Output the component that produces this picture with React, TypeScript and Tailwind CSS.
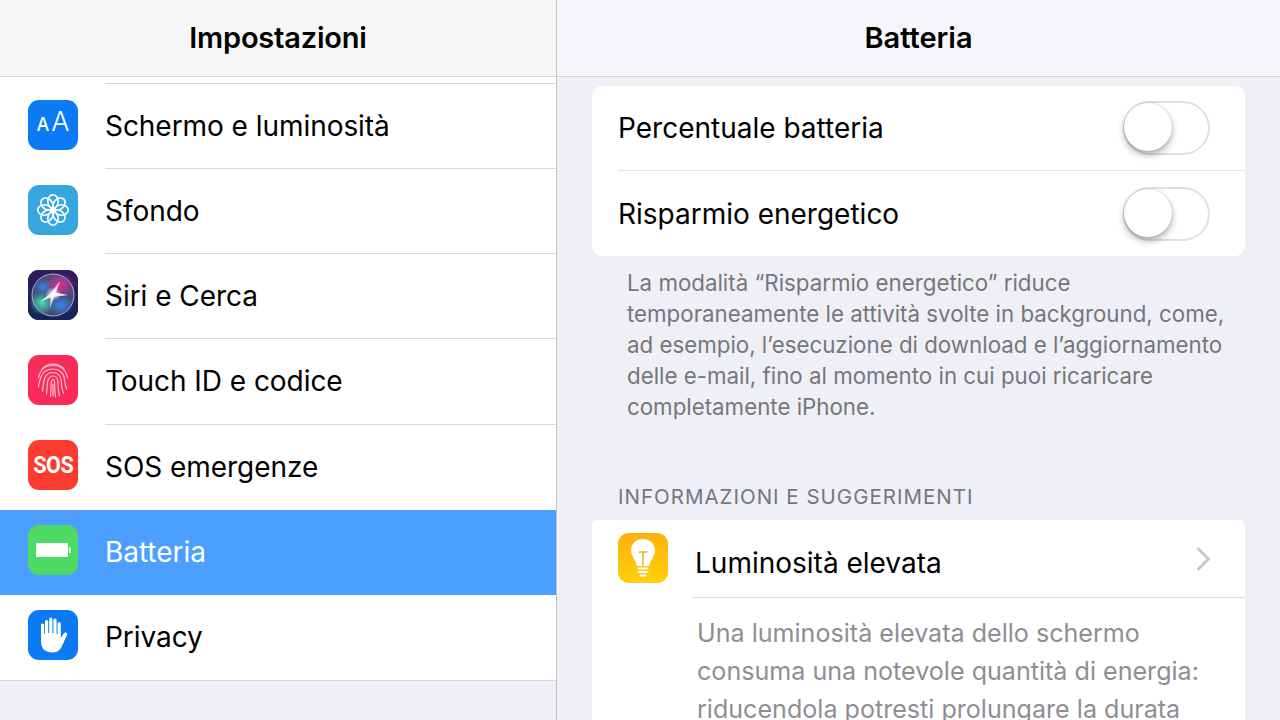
import React from 'react';

const Aa = () => (
  <div className="flex items-baseline justify-center text-white font-['Inter',sans-serif] leading-none pb-[7px]">
    <span className="text-[18px] font-medium mr-[2px]">A</span>
    <span className="text-[27px] font-light">A</span>
  </div>
);

const Flower = () => (
  <svg width="36" height="36" viewBox="0 0 36 36" fill="none" stroke="white" strokeWidth="1.6">
    {[0, 45, 90, 135, 180, 225, 270, 315].map((a) => (
      <ellipse key={a} cx="18" cy="9.5" rx="5.2" ry="6.8" transform={`rotate(${a} 18 18)`} />
    ))}
    <circle cx="18" cy="18" r="2.2" fill="white" stroke="none" />
  </svg>
);

const Siri = () => (
  <svg width="50" height="50" viewBox="0 0 50 50">
    <defs>
      <linearGradient id="siriBg" x1="0" y1="0" x2="0" y2="1">
        <stop offset="0%" stopColor="#35195c" />
        <stop offset="100%" stopColor="#12265a" />
      </linearGradient>
      <radialGradient id="siriPink" cx="50%" cy="50%" r="50%">
        <stop offset="0%" stopColor="#ea2f96" stopOpacity="0.95" />
        <stop offset="100%" stopColor="#ea2f96" stopOpacity="0" />
      </radialGradient>
      <radialGradient id="siriTeal" cx="50%" cy="50%" r="50%">
        <stop offset="0%" stopColor="#3fe8b4" stopOpacity="0.95" />
        <stop offset="100%" stopColor="#3fe8b4" stopOpacity="0" />
      </radialGradient>
      <radialGradient id="siriBlue" cx="50%" cy="50%" r="50%">
        <stop offset="0%" stopColor="#2f8cf2" stopOpacity="0.95" />
        <stop offset="100%" stopColor="#2f8cf2" stopOpacity="0" />
      </radialGradient>
      <radialGradient id="siriCore" cx="50%" cy="50%" r="50%">
        <stop offset="0%" stopColor="#ffffff" />
        <stop offset="100%" stopColor="#ffffff" stopOpacity="0" />
      </radialGradient>
    </defs>
    <rect width="50" height="50" fill="url(#siriBg)" />
    <circle cx="25" cy="25" r="21" fill="#4a4a78" />
    <ellipse cx="32" cy="15" rx="16" ry="12" fill="url(#siriPink)" />
    <ellipse cx="14" cy="33" rx="13" ry="12" fill="url(#siriTeal)" />
    <ellipse cx="33" cy="35" rx="13" ry="10" fill="url(#siriBlue)" />
    <ellipse cx="15" cy="17" rx="9" ry="8" fill="url(#siriBlue)" />
    <ellipse cx="25" cy="24" rx="8" ry="7" fill="url(#siriCore)" />
    <g fill="#fff" opacity="0.85">
      <polygon points="12,32 24,22 26,26" />
      <polygon points="32,11 23,23 27,25" />
      <polygon points="40,25 25,22 25,27" />
      <polygon points="22,37 23,24 27,25" />
    </g>
    <circle cx="25" cy="25" r="21" fill="none" stroke="#a9adc8" strokeWidth="1" />
  </svg>
);

const Fingerprint = () => (
  <svg width="36" height="38" viewBox="0 0 36 38" fill="none" stroke="#f9c3d0" strokeWidth="1.2" strokeLinecap="round">
    <path d="M7 8 C13 1.5 23 1.5 29 8" />
    <path d="M3.5 17 C5 8.5 11 4.5 18 4.5 C25 4.5 31 8.5 32.5 17" />
    <path d="M3.5 26 C3.8 22 5.2 18 6 16 C8 10.5 13 8 18 8 C24 8 29 12 29.5 18 C29.8 21 30 25 32 28" />
    <path d="M7.5 30 C8 26 8.5 22 9.5 18 C10.5 14 14 11.5 18 11.5 C22.5 11.5 26 15 26.2 19.5 C26.4 24 27 29 28.5 32" />
    <path d="M11.5 33 C12 28 12 23 13 19.5 C13.8 16.5 16 15 18 15 C21 15 22.8 17.5 22.8 20.5 C22.8 26 23.5 31 24.5 35" />
    <path d="M15.5 35.5 C16 30 16 25 16.3 21 C16.5 19.4 17 18.5 18 18.5 C19 18.5 19.5 19.6 19.5 21 C19.5 26 19.8 31 20.5 36" />
    <path d="M18 23 L18 35" />
  </svg>
);

const Battery = () => (
  <div className="flex items-center gap-[1px]">
    <div className="w-[32px] h-[14px] bg-white rounded-[1px]" />
    <div className="w-[2px] h-[6px] bg-white rounded-r-sm" />
  </div>
);

const Hand = () => (
  <svg width="30" height="38" viewBox="0 0 30 36" fill="white">
    <path d="M7 4.5 a1.6 1.6 0 0 1 3.2 0 V16 h1 V2.2 a1.6 1.6 0 0 1 3.2 0 V16 h1 V3 a1.6 1.6 0 0 1 3.2 0 V17 h1 V6.5 a1.6 1.6 0 0 1 3.2 0 V21 l3-4.5 c1.3-2 4.3-.6 3.2 1.6 L24 29 c-2 4.5-5 6.5-9.5 6.5 C8 35.5 3 32 3 25 V8 a1.6 1.6 0 0 1 3.2 0 V17 h.8 Z" />
  </svg>
);

const Bulb = () => (
  <svg width="30" height="40" viewBox="0 0 30 40">
    <path d="M15 1 C7.5 1 3 6.5 3 12.5 C3 18 7.5 21.5 9 28 H21 C22.5 21.5 27 18 27 12.5 C27 6.5 22.5 1 15 1 Z" fill="white" />
    <path d="M10.5 14 H19.5 M15 14 V27.5" stroke="#f2b01e" strokeWidth="1.5" fill="none" />
    <rect x="9.5" y="29.5" width="11" height="2" rx="1" fill="white" />
    <rect x="9.5" y="33" width="11" height="2" rx="1" fill="white" />
    <rect x="11.5" y="36.5" width="7" height="2" rx="1" fill="white" />
  </svg>
);

const Chevron = () => (
  <svg width="15" height="24" viewBox="0 0 15 24" fill="none" stroke="#c7c7cc" strokeWidth="3" strokeLinecap="round" strokeLinejoin="round">
    <path d="M2.5 2 L12.5 12 L2.5 22" />
  </svg>
);

const rows = [
  { label: 'Schermo e luminosità', bg: 'bg-[#0a7bf5]', icon: <Aa /> },
  { label: 'Sfondo', bg: 'bg-[#35a7de]', icon: <Flower /> },
  { label: 'Siri e Cerca', bg: 'bg-[#1c2050]', icon: <Siri /> },
  { label: 'Touch ID e codice', bg: 'bg-[#fa2b58]', icon: <Fingerprint /> },
  {
    label: 'SOS emergenze',
    bg: 'bg-[#fb3a30]',
    icon: <span className="text-white text-[24px] font-bold font-['Roboto',sans-serif] tracking-[-0.5px] scale-x-90">SOS</span>,
  },
  { label: 'Batteria', bg: 'bg-[#4cd964]', icon: <Battery />, selected: true },
  { label: 'Privacy', bg: 'bg-[#0a7bf5]', icon: <Hand /> },
];

const Toggle = () => (
  <div className="relative w-[87px] h-[54px] rounded-full bg-white border-[2px] border-[#e0e0e0]">
    <div className="absolute -left-[1px] top-0 w-[48px] h-[48px] rounded-full bg-white shadow-[0_4px_7px_rgba(0,0,0,0.3),0_0_2px_rgba(0,0,0,0.25)]" />
  </div>
);

export default function App() {
  return (
    <div className="flex w-[1280px] h-[720px] overflow-hidden bg-[#efeff6] font-['Inter',sans-serif] text-black">
      {/* Sidebar */}
      <div className="w-[557px] h-full flex flex-col border-r border-[#c4c4c7]">
        <div className="h-[77px] shrink-0 flex items-center justify-center bg-[#f7f7f7] border-b border-[#d4d4d6]">
          <span className="text-[29px] font-semibold tracking-[-0.2px]">Impostazioni</span>
        </div>
        <div className="bg-white pt-[6px]">
          <div className="ml-[105px] h-px bg-[#d9d9dc]" />
          {rows.map((r, i) => (
            <div
              key={r.label}
              className={`h-[85.15px] flex items-center pl-[28px] ${r.selected ? 'bg-[#4c9ffe]' : 'bg-white'}`}
            >
              <div className={`w-[50px] h-[50px] shrink-0 -mt-[4px] rounded-[11px] overflow-hidden flex items-center justify-center ${r.bg}`}>
                {r.icon}
              </div>
              <div
                className={`ml-[27px] flex-1 h-full flex items-center text-[28px] tracking-[-0.05px] ${r.selected ? 'text-white' : ''} ${i < rows.length - 1 && !r.selected && !rows[i + 1].selected ? 'border-b border-[#d9d9dc]' : ''}`}
              >
                {r.label}
              </div>
            </div>
          ))}
        </div>
        <div className="h-px bg-[#d9d9dc]" />
      </div>

      {/* Detail */}
      <div className="flex-1 h-full flex flex-col min-w-0">
        <div className="h-[77px] shrink-0 flex items-center justify-center bg-[#f6f6fa] border-b border-[#d4d4d6]">
          <span className="text-[29px] font-semibold">Batteria</span>
        </div>
        <div className="px-[35px] pt-[9px]">
          <div className="bg-white rounded-[10px]">
            <div className="h-[85px] ml-[26px] flex items-center justify-between pr-[35px] border-b border-[#e2e2e4]">
              <span className="text-[28px]">Percentuale batteria</span>
              <Toggle />
            </div>
            <div className="h-[85px] ml-[26px] flex items-center justify-between pr-[35px]">
              <span className="text-[28px]">Risparmio energetico</span>
              <Toggle />
            </div>
          </div>
          <p className="mt-[11px] pl-[35px] pr-[14px] text-[22.3px] leading-[31px] text-[#76767b]">
            La modalità “Risparmio energetico” riduce temporaneamente le attività svolte in background, come, ad esempio, l’esecuzione di download e l’aggiornamento delle e-mail, fino al momento in cui puoi ricaricare completamente iPhone.
          </p>
          <div className="mt-[61px] pl-[26px] text-[20.5px] leading-[28px] tracking-[1px] text-[#76767b]">INFORMAZIONI E SUGGERIMENTI</div>
          <div className="mt-[9px] bg-white rounded-t-[6px] pb-[30px]">
            <div className="flex">
              <div className="pl-[26px] pt-[13px]">
                <div className="w-[50px] h-[50px] rounded-[11px] bg-gradient-to-b from-[#fdb10b] to-[#ffcf0c] flex items-center justify-center">
                  <Bulb />
                </div>
              </div>
              <div className="ml-[24px] flex-1 h-[78px] flex items-center justify-between pr-[34px] border-b border-[#dcdcde]">
                <span className="ml-[3px] pt-[9px] text-[28px]">Luminosità elevata</span>
                <Chevron />
              </div>
            </div>
            <p className="mt-[16px] ml-[105px] pr-[30px] text-[25.1px] leading-[38px] text-[#8e8e93]">
              Una luminosità elevata dello schermo consuma una notevole quantità di energia: riducendola potresti prolungare la durata
            </p>
          </div>
        </div>
      </div>
    </div>
  );
}
